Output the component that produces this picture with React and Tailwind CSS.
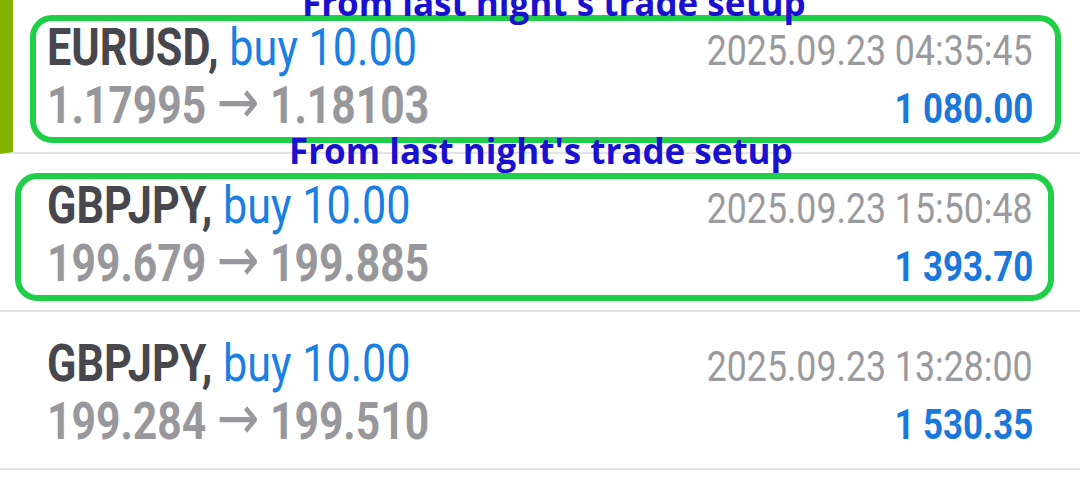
import React from "react";

const trades = [
  {
    sym: "EURUSD",
    side: "buy 10.00",
    open: "1.17995",
    close: "1.18103",
    time: "2025.09.23 04:35:45",
    profit: "1 080.00",
    active: true,
  },
  {
    sym: "GBPJPY",
    side: "buy 10.00",
    open: "199.679",
    close: "199.885",
    time: "2025.09.23 15:50:48",
    profit: "1 393.70",
  },
  {
    sym: "GBPJPY",
    side: "buy 10.00",
    open: "199.284",
    close: "199.510",
    time: "2025.09.23 13:28:00",
    profit: "1 530.35",
  },
];

function TradeRow({ t }) {
  return (
    <div
      className={
        "h-[158px] border-b-2 border-[#e4e4e6] pt-[24px] pr-[47px] " +
        (t.active ? "border-l-[13px] border-l-[#86b300] pl-[34px]" : "pl-[47px]")
      }
    >
      <div className="flex items-baseline justify-between leading-[55px]">
        <span className="inline-block origin-left scale-x-[0.83] whitespace-nowrap text-[52px]">
          <span className="font-bold text-[#47474d]">{t.sym},</span>{" "}
          <span className="text-[#1a7fe3]">{t.side}</span>
        </span>
        <span className="inline-block origin-right scale-x-[0.83] whitespace-nowrap text-[43px] text-[#9a9a9e]">
          {t.time}
        </span>
      </div>
      <div className="flex items-baseline justify-between leading-[55px]">
        <span className="inline-block origin-left scale-x-[0.82] whitespace-nowrap text-[52px] font-bold text-[#98989c]">
          {t.open}{" "}
          <span className="font-['DejaVu_Sans',sans-serif] text-[62px] font-normal leading-[0]">→</span>{" "}
          {t.close}
        </span>
        <span className="inline-block origin-right scale-x-[0.83] whitespace-nowrap text-[42px] font-bold text-[#1a78dc]">
          {t.profit}
        </span>
      </div>
    </div>
  );
}

export default function App() {
  return (
    <div className="relative h-[480px] w-[1080px] overflow-hidden bg-white font-['Roboto',sans-serif]">
      <div className="-mt-[4px]">
        {trades.map((t, i) => (
          <TradeRow key={i} t={t} />
        ))}
      </div>

      {/* annotations drawn over the list */}
      <div className="absolute left-[30px] top-[15px] h-[128px] w-[1031px] rounded-[22px] border-[6px] border-[#1fcf47]" />
      <div className="absolute left-[15px] top-[173px] h-[128px] w-[1039px] rounded-[22px] border-[6px] border-[#1fcf47]" />
      <div className="absolute left-[302px] top-[-17px] whitespace-nowrap font-['Open_Sans',sans-serif] text-[35px] font-bold leading-[40px] text-[#1a10cf]">
        From last night's trade setup
      </div>
      <div className="absolute left-[289px] top-[131px] whitespace-nowrap font-['Open_Sans',sans-serif] text-[35px] font-bold leading-[40px] text-[#1a10cf]">
        From last night's trade setup
      </div>
    </div>
  );
}
